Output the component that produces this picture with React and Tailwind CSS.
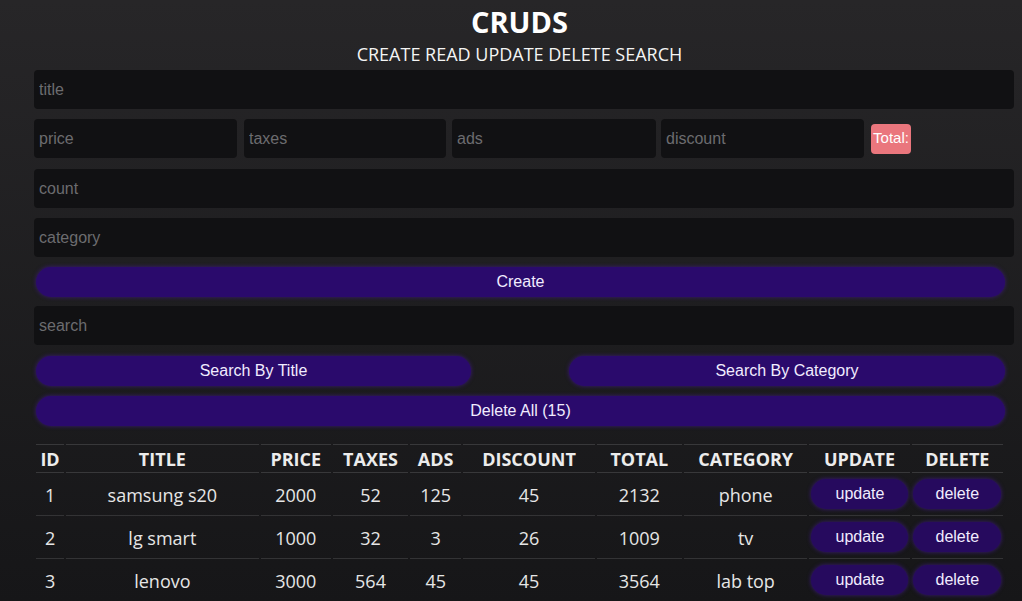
const rows = [
  { id: 1, title: 'samsung s20', price: 2000, taxes: 52, ads: 125, discount: 45, total: 2132, category: 'phone' },
  { id: 2, title: 'lg smart', price: 1000, taxes: 32, ads: 3, discount: 26, total: 1009, category: 'tv' },
  { id: 3, title: 'lenovo', price: 3000, taxes: 564, ads: 45, discount: 45, total: 3564, category: 'lab top' },
]

const cols = [
  ['ID', 'w-[28px]'],
  ['TITLE', 'w-[192px]'],
  ['PRICE', 'w-[70px]'],
  ['TAXES', 'w-[75px]'],
  ['ADS', 'w-[51px]'],
  ['DISCOUNT', 'w-[131px]'],
  ['TOTAL', 'w-[85px]'],
  ['CATEGORY', 'w-[123px]'],
  ['UPDATE', 'w-[100px]'],
  ['DELETE', 'w-[91px]'],
]

const inputCls =
  'h-[39px] bg-[#111113] rounded-[4px] px-[5px] text-[16px] text-white placeholder:text-[#6c6c6f] outline-none font-["Liberation_Sans",Arial,sans-serif]'

const btnCls =
  'h-[30px] rounded-full bg-[#2a0a6c] text-[#f1ecff] text-[16px] shadow-[0_0_4px_#3a1a7a] font-["Liberation_Sans",Arial,sans-serif]'

function Field({ placeholder, className = '' }) {
  return <input placeholder={placeholder} className={`${inputCls} ${className}`} />
}

export default function App() {
  return (
    <div className='min-h-[601px] bg-linear-to-b from-[#272628] to-[#161618] font-["Open_Sans","Noto_Sans",sans-serif] overflow-hidden'>
      <div className="ml-[34px] w-[971px] flex flex-col">
        <h2 className="text-center text-white font-bold text-[29px] leading-[30px] pt-[7px]">CRUDS</h2>
        <p className="text-center text-[#f4f4f4] text-[18px] leading-[24px] mt-[5px]">
          CREATE READ UPDATE DELETE SEARCH
        </p>

        <Field placeholder="title" className="w-[980px] mt-[4px]" />

        <div className="flex items-center mt-[10px] w-[980px]">
          <Field placeholder="price" className="w-[203px]" />
          <Field placeholder="taxes" className="w-[202px] ml-[7px]" />
          <Field placeholder="ads" className="w-[204px] ml-[6px]" />
          <Field placeholder="discount" className="w-[203px] ml-[5px]" />
          <span className='ml-[7px] h-[30px] w-[40px] flex items-center justify-center rounded-[4px] bg-[#ea767d] text-white text-[15px] font-["Liberation_Sans",Arial,sans-serif]'>
            Total:
          </span>
        </div>

        <Field placeholder="count" className="w-[980px] mt-[11px]" />
        <Field placeholder="category" className="w-[980px] mt-[10px]" />

        <button className={`${btnCls} ml-[2px] w-[969px] mt-[10px]`}>Create</button>

        <Field placeholder="search" className="w-[980px] mt-[9px]" />

        <div className="flex justify-between ml-[2px] w-[969px] mt-[11px]">
          <button className={`${btnCls} w-[435px]`}>Search By Title</button>
          <button className={`${btnCls} w-[436px]`}>Search By Category</button>
        </div>

        <button className={`${btnCls} ml-[2px] w-[969px] mt-[10px]`}>Delete All (15)</button>

        <table className="table-fixed border-separate border-spacing-x-[2px] border-spacing-y-0 w-[971px] mt-[18px] text-[#e6e6e6]">
          <thead>
            <tr>
              {cols.map(([name, w]) => (
                <th
                  key={name}
                  className={`${w} h-[29px] border-y border-[#38383a] text-[18px] font-bold text-[#ececec] text-center leading-[26px] px-0`}
                >
                  {name}
                </th>
              ))}
            </tr>
          </thead>
          <tbody>
            {rows.map((r) => (
              <tr key={r.id} className="text-[18px] text-center">
                <td className="h-[43px] border-b border-[#333335] pt-[3px]">{r.id}</td>
                <td className="border-b border-[#333335] pt-[3px]">{r.title}</td>
                <td className="border-b border-[#333335] pt-[3px]">{r.price}</td>
                <td className="border-b border-[#333335] pt-[3px]">{r.taxes}</td>
                <td className="border-b border-[#333335] pt-[3px]">{r.ads}</td>
                <td className="border-b border-[#333335] pt-[3px]">{r.discount}</td>
                <td className="border-b border-[#333335] pt-[3px]">{r.total}</td>
                <td className="border-b border-[#333335] pt-[3px]">{r.category}</td>
                <td className="border-b border-[#333335]">
                  <button className={`${btnCls} w-[97px] ml-[1px] bg-[#260a5e] text-[#d8cff5]`}>update</button>
                </td>
                <td className="border-b border-[#333335]">
                  <button className={`${btnCls} w-[88px] bg-[#260a5e] text-[#d8cff5]`}>delete</button>
                </td>
              </tr>
            ))}
          </tbody>
        </table>
      </div>
    </div>
  )
}
